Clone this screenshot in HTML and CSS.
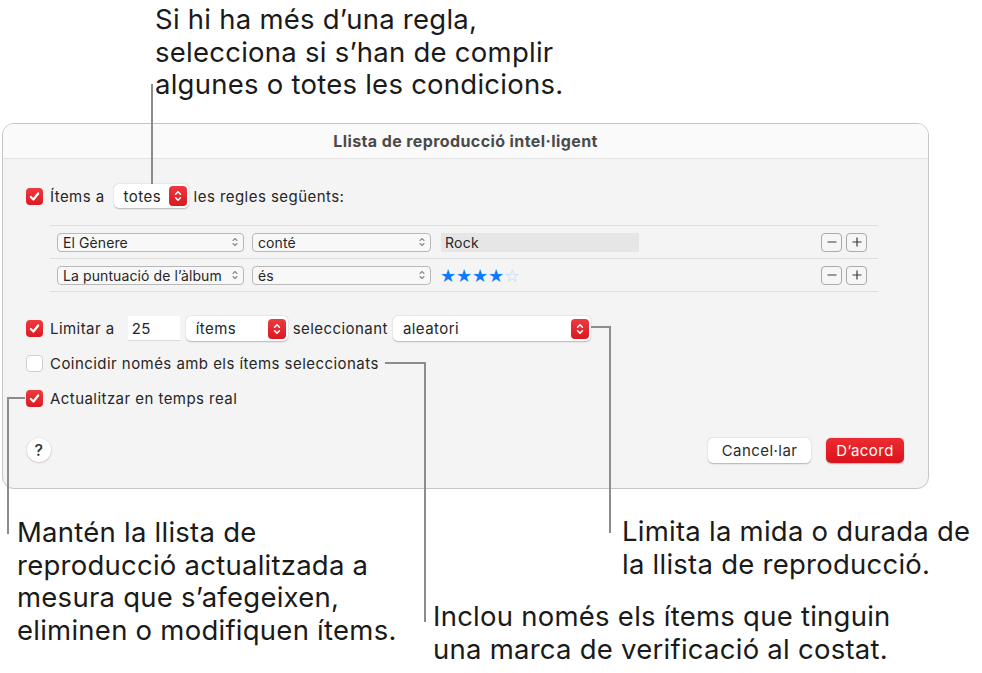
FILE: index.html
```html
<!DOCTYPE html>
<html lang="ca">
<head>
    <meta charset="UTF-8">
    <meta name="viewport" content="width=device-width, initial-scale=1.0">
    <title>Llista de reproducció intel·ligent</title>
    <link rel="stylesheet" href="styles.css">
</head>
<body>

<div class="page">

    <p class="note note-rules">Si hi ha més d’una regla,<br>selecciona si s’han de complir<br>algunes o totes les condicions.</p>

    <div class="dialog">
        <div class="titlebar">Llista de reproducció intel·ligent</div>

        <div class="content">
            <div class="row row-match">
                <span class="check on"><svg viewBox="0 0 12 12"><path d="M2.6 6.4 L5 8.8 L9.4 3.2"/></svg></span>
                <span class="label">Ítems a</span>
                <span class="popup popup-totes">totes
                    <span class="stepper"><svg viewBox="0 0 10 16"><path d="M2.6 6.2 L5 3.8 L7.4 6.2 M2.6 9.8 L5 12.2 L7.4 9.8"/></svg></span>
                </span>
                <span class="label">les regles següents:</span>
            </div>

            <div class="rules">
                <div class="rule">
                    <span class="select select-field">El Gènere<span class="arrows"><svg viewBox="0 0 8 12"><path d="M2 4.5 L4 2.5 L6 4.5 M2 7.5 L4 9.5 L6 7.5"/></svg></span></span>
                    <span class="select select-op">conté<span class="arrows"><svg viewBox="0 0 8 12"><path d="M2 4.5 L4 2.5 L6 4.5 M2 7.5 L4 9.5 L6 7.5"/></svg></span></span>
                    <span class="value-field">Rock</span>
                    <span class="rule-buttons">
                        <span class="mini-btn"><svg viewBox="0 0 12 12"><path d="M1.5 6 H10.5"/></svg></span>
                        <span class="mini-btn"><svg viewBox="0 0 12 12"><path d="M1.5 6 H10.5 M6 1.5 V10.5"/></svg></span>
                    </span>
                </div>
                <div class="rule">
                    <span class="select select-field">La puntuació de l’àlbum<span class="arrows"><svg viewBox="0 0 8 12"><path d="M2 4.5 L4 2.5 L6 4.5 M2 7.5 L4 9.5 L6 7.5"/></svg></span></span>
                    <span class="select select-op">és<span class="arrows"><svg viewBox="0 0 8 12"><path d="M2 4.5 L4 2.5 L6 4.5 M2 7.5 L4 9.5 L6 7.5"/></svg></span></span>
                    <span class="stars"><span class="star">★</span><span class="star">★</span><span class="star">★</span><span class="star">★</span><span class="star off">☆</span></span>
                    <span class="rule-buttons">
                        <span class="mini-btn"><svg viewBox="0 0 12 12"><path d="M1.5 6 H10.5"/></svg></span>
                        <span class="mini-btn"><svg viewBox="0 0 12 12"><path d="M1.5 6 H10.5 M6 1.5 V10.5"/></svg></span>
                    </span>
                </div>
            </div>

            <div class="row row-limit">
                <span class="check on"><svg viewBox="0 0 12 12"><path d="M2.6 6.4 L5 8.8 L9.4 3.2"/></svg></span>
                <span class="label">Limitar a</span>
                <span class="number-field">25</span>
                <span class="popup popup-unit">ítems
                    <span class="stepper"><svg viewBox="0 0 10 16"><path d="M2.6 6.2 L5 3.8 L7.4 6.2 M2.6 9.8 L5 12.2 L7.4 9.8"/></svg></span>
                </span>
                <span class="label">seleccionant</span>
                <span class="popup popup-order">aleatori
                    <span class="stepper"><svg viewBox="0 0 10 16"><path d="M2.6 6.2 L5 3.8 L7.4 6.2 M2.6 9.8 L5 12.2 L7.4 9.8"/></svg></span>
                </span>
            </div>

            <div class="row row-option">
                <span class="check"></span>
                <span class="label">Coincidir només amb els ítems seleccionats</span>
            </div>

            <div class="row row-option">
                <span class="check on"><svg viewBox="0 0 12 12"><path d="M2.6 6.4 L5 8.8 L9.4 3.2"/></svg></span>
                <span class="label">Actualitzar en temps real</span>
            </div>

            <div class="footer">
                <span class="help">?</span>
                <div class="actions">
                    <span class="btn">Cancel·lar</span>
                    <span class="btn btn-default">D’acord</span>
                </div>
            </div>
        </div>
    </div>

    <!-- línies de les anotacions -->
    <svg class="leaders" width="982" height="673" viewBox="0 0 982 673">
        <path d="M152 84 V184"/>
        <path d="M8 534 V398 H25"/>
        <path d="M385 363 H425 V622"/>
        <path d="M591 327 H610 V533"/>
    </svg>

    <p class="note note-live">Mantén la llista de<br>reproducció actualitzada a<br>mesura que s’afegeixen,<br>eliminen o modifiquen ítems.</p>
    <p class="note note-checked">Inclou només els ítems que tinguin<br>una marca de verificació al costat.</p>
    <p class="note note-limit">Limita la mida o durada de<br>la llista de reproducció.</p>

</div>

</body>
</html>
```

FILE: styles.css
```css
body {
    margin: 0;
    background-color: #ffffff;
    font-family: Inter, "Liberation Sans", Arial, sans-serif;
    font-feature-settings: "locl" 0, "calt" 0;
    color: #1d1d1d;
}

.page {
    position: relative;
    width: 982px;
    height: 673px;
    overflow: hidden;
}

/* anotacions */

.note {
    position: absolute;
    margin: 0;
    font-size: 27.5px;
    letter-spacing: 0.25px;
    line-height: 32.5px;
    color: #1a1a1a;
    white-space: nowrap;
}

.note-rules {
    left: 155px;
    top: 3px;
}

.note-live {
    left: 17px;
    top: 516px;
}

.note-checked {
    left: 433px;
    top: 600px;
}

.note-limit {
    left: 622px;
    top: 515px;
}

.leaders {
    position: absolute;
    left: 0;
    top: 0;
    pointer-events: none;
}

.leaders path {
    fill: none;
    stroke: #8c8c8c;
    stroke-width: 2;
}

/* finestra */

.dialog {
    position: absolute;
    left: 2px;
    top: 123px;
    width: 927px;
    height: 366px;
    box-sizing: border-box;
    border: 1px solid #c6c6c6;
    border-radius: 12px;
    background-color: #f4f4f4;
    overflow: hidden;
    font-size: 15px;
    letter-spacing: 0.45px;
    color: #262626;
}

.titlebar {
    height: 34px;
    line-height: 34px;
    text-align: center;
    font-weight: 700;
    font-size: 16px;
    letter-spacing: 0.4px;
    color: #4a4a4a;
    background-color: #fafafa;
    border-bottom: 1px solid #e2e2e2;
}

.content {
    padding: 0 24px 0 23px;
}

.row {
    display: flex;
    align-items: center;
}

.row-match {
    height: 24px;
    margin-top: 25px;
}

.row-limit {
    height: 25px;
    margin-top: 24px;
}

.row-option {
    height: 26px;
    margin-top: 9px;
}

.label {
    margin-left: 7px;
    white-space: nowrap;
}

.check {
    width: 17px;
    height: 17px;
    flex: none;
    box-sizing: border-box;
    border: 1px solid #cfcfcf;
    border-radius: 4px;
    background-color: #ffffff;
    display: flex;
    align-items: center;
    justify-content: center;
}

.check.on {
    border: none;
    background: linear-gradient(#ee3a3f, #dc1a22);
}

.check svg {
    width: 13px;
    height: 13px;
}

.check svg path {
    fill: none;
    stroke: #ffffff;
    stroke-width: 2;
    stroke-linecap: round;
    stroke-linejoin: round;
}

/* desplegables amb fletxes vermelles */

.popup {
    height: 24px;
    box-sizing: border-box;
    display: flex;
    align-items: center;
    justify-content: space-between;
    padding: 0 2px 0 10px;
    background-color: #ffffff;
    border-radius: 5px;
    box-shadow: 0 0.5px 1.5px rgba(0, 0, 0, 0.25);
    white-space: nowrap;
}

.popup-totes {
    width: 75px;
    margin-left: 9px;
}

.popup-totes + .label {
    margin-left: 6px;
}

.popup-unit {
    width: 102px;
    height: 25px;
    margin-left: 6px;
}

.popup-order {
    width: 198px;
    height: 25px;
    margin-left: 5px;
}

.stepper {
    width: 18px;
    height: 20px;
    border-radius: 4px;
    background: linear-gradient(#ee3a3f, #da1820);
    display: flex;
    align-items: center;
    justify-content: center;
}

.stepper svg {
    width: 10px;
    height: 16px;
}

.stepper svg path {
    fill: none;
    stroke: #ffffff;
    stroke-width: 1.6;
    stroke-linecap: round;
    stroke-linejoin: round;
}

.number-field {
    width: 52px;
    height: 25px;
    box-sizing: border-box;
    margin-left: 13px;
    padding-left: 4px;
    line-height: 25px;
    background-color: #ffffff;
    border-bottom: 1px solid #d9d9d9;
}

.number-field + .popup {
    margin-left: 6px;
}

.popup + .label {
    margin-left: 5px;
}

/* regles */

.rules {
    width: 828px;
    margin: 17px 0 0 24px;
    border-top: 1px solid #dedede;
}

.rule {
    height: 32px;
    display: flex;
    align-items: center;
    padding: 0 11px 0 7px;
    border-bottom: 1px solid #dedede;
}

.select {
    height: 19px;
    box-sizing: border-box;
    display: flex;
    align-items: center;
    justify-content: space-between;
    padding: 0 4px 0 5px;
    border: 1px solid #b8b8b8;
    border-radius: 4px;
    background-color: #f8f8f8;
    font-size: 14px;
    letter-spacing: 0.1px;
    white-space: nowrap;
}

.select-field {
    width: 187px;
}

.select-op {
    width: 179px;
    margin-left: 8px;
}

.arrows svg {
    display: block;
    width: 8px;
    height: 12px;
}

.arrows svg path {
    fill: none;
    stroke: #8a8a8a;
    stroke-width: 1.1;
    stroke-linecap: round;
    stroke-linejoin: round;
}

.value-field {
    width: 198px;
    height: 19px;
    box-sizing: border-box;
    margin-left: 10px;
    padding-left: 4px;
    line-height: 20px;
    font-size: 14px;
    letter-spacing: 0.3px;
    background-color: #e6e6e6;
}

.stars {
    margin-left: 9px;
    display: flex;
    font-family: "DejaVu Sans", sans-serif;
    font-size: 18px;
    letter-spacing: 0;
    line-height: 19px;
}

.star {
    width: 16px;
    text-align: center;
    color: #0a7cff;
}

.star.off {
    color: #b9d6fb;
}

.rule-buttons {
    margin-left: auto;
    display: flex;
    gap: 4px;
}

.mini-btn {
    width: 21px;
    height: 19px;
    box-sizing: border-box;
    border: 1px solid #a9a9a9;
    border-radius: 4px;
    background-color: #f6f6f6;
    display: flex;
    align-items: center;
    justify-content: center;
}

.mini-btn svg {
    width: 12px;
    height: 12px;
}

.mini-btn svg path {
    fill: none;
    stroke: #3a3a3a;
    stroke-width: 1.2;
}

/* peu */

.footer {
    margin-top: 26px;
    height: 26px;
    display: flex;
    align-items: center;
    justify-content: space-between;
}

.help {
    width: 24px;
    height: 24px;
    margin-left: 1px;
    border-radius: 50%;
    background-color: #ffffff;
    box-shadow: 0 0.5px 2px rgba(0, 0, 0, 0.28);
    display: flex;
    align-items: center;
    justify-content: center;
    font-size: 16px;
    font-weight: 500;
    color: #333;
}

.actions {
    display: flex;
    gap: 15px;
}

.btn {
    height: 25px;
    box-sizing: border-box;
    display: flex;
    align-items: center;
    justify-content: center;
    border-radius: 5px;
    background-color: #ffffff;
    box-shadow: 0 0.5px 1.5px rgba(0, 0, 0, 0.28);
    font-size: 15px;
    color: #2b2b2b;
}

.btn:first-child {
    width: 103px;
}

.btn-default {
    width: 78px;
    background: linear-gradient(#ec2c33, #dc121b);
    color: #ffffff;
}
```
